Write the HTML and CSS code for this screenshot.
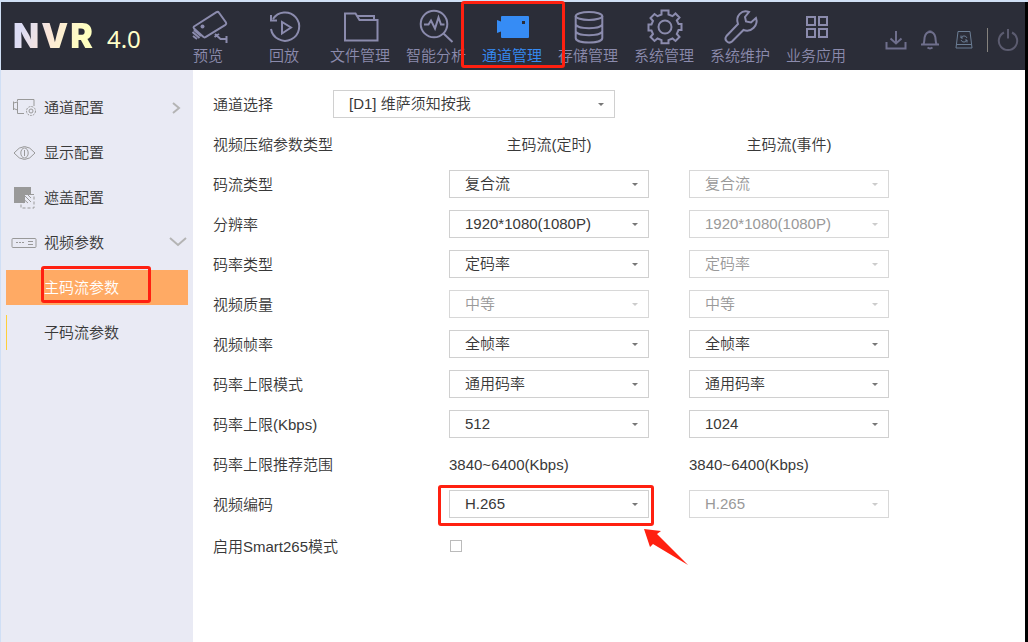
FILE: index.html
```html
<!DOCTYPE html>
<html lang="zh-CN">
<head>
    <meta charset="UTF-8">
    <meta name="viewport" content="width=device-width, initial-scale=1.0">
    <title>NVR 4.0</title>
    <link rel="stylesheet" href="styles.css">
</head>
<body>
    <div class="page">
        <header class="topbar">
            <div class="logo"><span class="logo-name">NVR</span><span class="logo-version">4.0</span></div>
            <nav class="main-nav">
                <a class="nav-item" href="#preview">
                    <svg class="nav-icon" viewBox="0 0 36 36"><path d="M4 18.500L26.500 4.200q1.500-.9 2.500.6L36 14.500q.8 1.400-.6 2.400L15.500 29.200q-1.300.7-2.300-.5L4 20.500q-.9-1.200 0-2zM24.500 29l4.500-3M25 26l5.500 5h6M36.500 28v7M2.500 24l7 6M3 28l4 3M4 22l7 6"/><circle class="fill" cx="12.500" cy="18.500" r="2"/></svg>
                    <span>预览</span>
                </a>
                <a class="nav-item" href="#playback">
                    <svg class="nav-icon" viewBox="0 0 36 36"><path d="M7 11a14.200 14.200 0 1 1-2 10M5 7v5.500h6M16 14v11.500l9-6z"/></svg>
                    <span>回放</span>
                </a>
                <a class="nav-item" href="#files">
                    <svg class="nav-icon" viewBox="0 0 36 36"><path d="M3 5.500h10.500l4 6.500H35.500v20.500H3zM15 8h17v4"/></svg>
                    <span>文件管理</span>
                </a>
                <a class="nav-item" href="#analysis">
                    <svg class="nav-icon" viewBox="0 0 36 36"><circle cx="16" cy="16" r="13.300"/><path d="M25.500 25.500l9 8.500M6 16.500h4.500l2.500-4 4 8 3.500-11 2.500 7h3.500"/></svg>
                    <span>智能分析</span>
                </a>
                <a class="nav-item active" href="#channel">
                    <svg class="nav-icon" viewBox="0 0 36 36"><path class="fill" fill-rule="evenodd" d="M3 12l4 1.500V9q0-1 1-1h26q1 0 1 1v20q0 1-1 1H8q-1 0-1-1v-5.500L3 25zM28 13v3h3v-3z"/></svg>
                    <span>通道管理</span>
                    <i class="mark mark-nav"></i>
                </a>
                <a class="nav-item" href="#storage">
                    <svg class="nav-icon" viewBox="0 0 36 36"><ellipse cx="19" cy="8" rx="13.300" ry="4"/><path d="M5.700 8v22c0 6 26.600 6 26.600 0V8M5.700 16c0 5.500 26.600 5.500 26.600 0M5.700 23c0 5.500 26.600 5.500 26.600 0"/></svg>
                    <span>存储管理</span>
                </a>
                <a class="nav-item" href="#system">
                    <svg class="nav-icon" viewBox="0 0 36 36"><path d="M15.500 2.500h7v4l4 1.700 3-2.700 4 4-2.700 3 1.700 3.500h3v6h-3L30.800 26l2.700 3-4 4-3-2.500-4 1.700v3h-7v-3l-4-1.700-3 2.500-4-4 2.500-3L5.500 22.500h-3v-6h3L7 13l-2.500-3 4-4 3 2.200 4-1.700z"/><circle cx="19" cy="19" r="6.500"/></svg>
                    <span>系统管理</span>
                </a>
                <a class="nav-item" href="#maintain">
                    <svg class="nav-icon" viewBox="0 0 36 36"><path d="M27 4c-7-3-14 4-11 12L4.500 28c-3 4 2 8.500 5.500 5.500L21.500 22c8 3 15-5 12.500-12l-5 4.500-5-1-1-4.500z"/></svg>
                    <span>系统维护</span>
                </a>
                <a class="nav-item" href="#apps">
                    <svg class="nav-icon" viewBox="0 0 36 36"><path d="M9 9h8v8H9zM21 9h8v8h-8zM9 21h8v8H9zM21 21h8v8h-8z"/></svg>
                    <span>业务应用</span>
                </a>
            </nav>
            <div class="tools">
                <button class="tool" type="button" aria-label="下载"><svg viewBox="0 0 22 22"><path d="M1.500 13v6.500h19V13M11 2v12M5.500 9.500L11 14.500l5.500-5"/></svg></button>
                <button class="tool" type="button" aria-label="报警"><svg viewBox="0 0 22 22"><path d="M2 15.500h18M4.500 15c1-2 .7-4 1.200-7C6.500 4.500 8.500 3 11 3s4.500 1.500 5.300 5c.5 3 .2 5 1.200 7M9.500 2.500h3M8.500 18.500q2.500 1.800 5 0"/></svg></button>
                <button class="tool tool-disk" type="button" aria-label="硬盘"><svg viewBox="0 0 22 22"><path d="M5 2.500h12L19 19H3zM3.500 15.500h15M8 9a3.200 3.200 0 0 1 6 0M14 11a3.200 3.200 0 0 1-6 0M8 6.500V9h2M14 13.500V11h-2"/></svg></button>
                <i class="divider"></i>
                <button class="tool tool-power" type="button" aria-label="电源"><svg viewBox="0 0 22 22"><path d="M7 3.500a9.200 9.200 0 1 0 8 0M11 0v9.500"/></svg></button>
            </div>
        </header>

        <div class="body">
            <aside class="sidebar">
                <a class="side-item" href="#channel-config">
                    <svg class="side-icon" viewBox="0 0 26 22"><path d="M5.500 4.500V2.500H22V9M5.500 5v11.500H12M1.500 4.500v8.500M1.500 6l4-1M1.500 11.500l4 1.500"/><circle cx="19" cy="14" r="4.500" stroke-dasharray="2 1"/><circle cx="19" cy="14" r="2"/></svg>
                    <span>通道配置</span>
                    <svg class="arrow" viewBox="0 0 16 12"><path d="M5 1l6 5-6 5"/></svg>
                </a>
                <a class="side-item" href="#display-config">
                    <svg class="side-icon" viewBox="0 0 26 22"><path d="M2 11q10.500-13 21 0-10.500 13-21 0z"/><ellipse cx="12.500" cy="11" rx="3.700" ry="5"/><path d="M12.500 8v6"/></svg>
                    <span>显示配置</span>
                </a>
                <a class="side-item" href="#mask-config">
                    <svg class="side-icon" viewBox="0 0 26 22"><path class="fill" d="M2 0h17v8h-6v8H2z"/><path d="M8 9l8 7M12 8l7 7M8 13l4 3M16 8l3 3"/><path stroke-dasharray="3 2" d="M19 7.500h3v13.500H9v-4"/></svg>
                    <span>遮盖配置</span>
                </a>
                <a class="side-item" href="#video-params">
                    <svg class="side-icon" viewBox="0 0 26 22"><rect x="0" y="6.500" width="24" height="9" rx="1"/><path d="M16 9.500h5M16 12.500h5M4 10.500h2M7 10.500h2M10 10.500h2"/></svg>
                    <span>视频参数</span>
                    <svg class="arrow arrow-down" viewBox="0 0 16 12"><path d="M0 1l8 7 8-7"/></svg>
                </a>
                <a class="side-item sub-item active" href="#main-stream"><span>主码流参数</span><i class="mark mark-side"></i></a>
                <a class="side-item sub-item" href="#sub-stream"><span>子码流参数</span></a>
            </aside>

            <form class="content">
                <div class="channel-row">
                    <label for="channel">通道选择</label>
                    <select id="channel"><option>[D1] 维萨须知按我</option></select>
                </div>
                <div class="params">
                    <span>视频压缩参数类型</span>
                    <span class="col-title">主码流(定时)</span>
                    <span class="col-title">主码流(事件)</span>

                    <label for="stream-type">码流类型</label>
                    <select id="stream-type"><option>复合流</option></select>
                    <select aria-label="码流类型 事件" disabled><option>复合流</option></select>

                    <label for="resolution">分辨率</label>
                    <select id="resolution"><option>1920*1080(1080P)</option></select>
                    <select aria-label="分辨率 事件" disabled><option>1920*1080(1080P)</option></select>

                    <label for="rate-type">码率类型</label>
                    <select id="rate-type"><option>定码率</option></select>
                    <select aria-label="码率类型 事件" disabled><option>定码率</option></select>

                    <label for="quality">视频质量</label>
                    <select id="quality" disabled><option>中等</option></select>
                    <select aria-label="视频质量 事件" disabled><option>中等</option></select>

                    <label for="fps">视频帧率</label>
                    <select id="fps"><option>全帧率</option></select>
                    <select aria-label="视频帧率 事件"><option>全帧率</option></select>

                    <label for="limit-mode">码率上限模式</label>
                    <select id="limit-mode"><option>通用码率</option></select>
                    <select aria-label="码率上限模式 事件"><option>通用码率</option></select>

                    <label for="limit">码率上限(Kbps)</label>
                    <select id="limit"><option>512</option></select>
                    <select aria-label="码率上限 事件"><option>1024</option></select>

                    <span>码率上限推荐范围</span>
                    <span>3840~6400(Kbps)</span>
                    <span>3840~6400(Kbps)</span>

                    <label for="codec">视频编码</label>
                    <div class="codec">
                        <select id="codec"><option>H.265</option></select>
                        <i class="mark mark-codec"></i>
                        <svg class="pointer" viewBox="0 0 46 38"><path d="M1 1l17 2-4 3 31 31-35-21-3 3z"/></svg>
                    </div>
                    <select aria-label="视频编码 事件" disabled><option>H.265</option></select>

                    <label for="smart265">启用Smart265模式</label>
                    <input id="smart265" type="checkbox">
                </div>
            </form>
        </div>
    </div>
</body>
</html>
```
FILE: styles.css
```css
* {
    box-sizing: border-box;
}
body {
    margin: 0;
    font-family: "Liberation Sans", "Noto Sans CJK SC", sans-serif;
    font-size: 15px;
    font-weight: 350;
    line-height: 20px;
    color: #383838;
    background: #fff;
}
a {
    color: inherit;
    text-decoration: none;
}
svg {
    display: block;
    fill: none;
    stroke: currentColor;
    overflow: visible;
}
.fill {
    fill: currentColor;
    stroke: none;
}
.page {
    display: flex;
    flex-direction: column;
    min-height: 100vh;
    border-top: 2px solid #d0dff5;
}

/* top bar */
.topbar {
    display: flex;
    height: 68px;
    background: #2b2d38;
    border-left: 1px solid #d0dff5;
    border-right: 3px solid #000;
}
.logo {
    display: flex;
    align-items: baseline;
    gap: 12px;
    width: 169px;
    padding: 10px 0 0 12px;
    line-height: 48px;
}
.logo-name {
    font-family: Inter, sans-serif;
    font-size: 34px;
    font-weight: 900;
    letter-spacing: 2px;
    color: transparent;
    background: linear-gradient(110deg, #dcdcf4 15%, #fbe6d8 45%, #ffffc0 80%);
    -webkit-background-clip: text;
    background-clip: text;
}
.logo-version {
    font-family: "Noto Sans", sans-serif;
    font-size: 24px;
    font-weight: 400;
    color: #ffffc8;
}
.main-nav {
    display: flex;
}
.nav-item {
    position: relative;
    display: flex;
    flex-direction: column;
    align-items: center;
    gap: 3px;
    width: 76px;
    padding-top: 6px;
    line-height: 18px;
    color: #8b8bad;
    white-space: nowrap;
}
.nav-item.active {
    color: #368cf5;
}
.nav-icon {
    width: 36px;
    height: 36px;
    stroke-width: 2;
}
.tools {
    display: flex;
    align-items: center;
    gap: 12px;
    margin-left: auto;
    padding: 8px 6px 0 0;
    color: #6f6f8c;
}
.tool {
    width: 22px;
    padding: 0;
    border: 0;
    background: none;
    color: inherit;
}
.tool svg {
    height: 22px;
    stroke-width: 2;
}
.tool-disk {
    color: #6b7d94;
}
.tool-disk svg {
    stroke-width: 1;
}
.tool-power {
    color: #5c5c70;
}
.divider {
    width: 1px;
    height: 24px;
    margin-right: -3px;
    background: #85827e;
}

/* side menu */
.body {
    display: flex;
    flex: 1;
    border-right: 3px solid #000;
}
.sidebar {
    display: flex;
    flex-direction: column;
    gap: 10px;
    flex: none;
    width: 193px;
    padding: 20px 5px;
    border-left: 1px solid #d0dff5;
    background: #e9eaf4;
}
.side-item {
    position: relative;
    display: flex;
    align-items: center;
    gap: 6px;
    height: 35px;
    padding: 0 1px 0 6px;
}
.side-icon {
    width: 26px;
    height: 22px;
    color: #999;
}
.arrow {
    width: 16px;
    height: 12px;
    margin-left: auto;
    margin-right: 3px;
    color: #b4b4b4;
    stroke-width: 2;
}
.arrow-down {
    margin-right: 1px;
}
.sub-item {
    padding-left: 37px;
    border-left: 1px solid #ffcf3a;
}
.sub-item.active {
    color: #fff;
    background: #ffaa64;
    border-left-color: #ffaa64;
}

/* form */
.content {
    flex: 1;
    padding: 14px 20px;
}
.content label,
.params > span {
    padding-top: 2px;
}
.channel-row {
    display: flex;
    align-items: center;
    height: 40px;
}
.channel-row label {
    width: 120px;
}
.channel-row select {
    width: 282px;
}
.params {
    display: grid;
    grid-template-columns: 196px 200px 200px;
    grid-template-rows: repeat(10, 40px) 44px;
    column-gap: 40px;
    align-items: center;
}
.col-title {
    text-align: center;
}
select {
    display: block;
    width: 100%;
    height: 28px;
    padding: 0 15px;
    border: 1px solid #d0d0d0;
    border-radius: 0;
    appearance: none;
    font: inherit;
    color: #383838;
    background: #fff url("data:image/svg+xml,%3Csvg xmlns='http://www.w3.org/2000/svg' width='6' height='3'%3E%3Cpath d='M0 0h6L3 3z' fill='%23777'/%3E%3C/svg%3E") no-repeat right 10px center;
}
select:disabled {
    color: #999;
    opacity: 1;
    border-color: #d8d8d8;
    background-image: url("data:image/svg+xml,%3Csvg xmlns='http://www.w3.org/2000/svg' width='6' height='3'%3E%3Cpath d='M0 0h6L3 3z' fill='%23ccc'/%3E%3C/svg%3E");
}
input[type="checkbox"] {
    width: 12px;
    height: 12px;
    margin: 0 1px;
    border: 1px solid #bbb;
    appearance: none;
    background: #fff;
}
.codec {
    position: relative;
}

/* red marks over the page */
.mark {
    position: absolute;
    z-index: 2;
    border: 3px solid #ff2010;
    border-radius: 3px;
    pointer-events: none;
}
.mark-nav {
    top: -1px;
    left: -13px;
    width: 104px;
    height: 67px;
}
.mark-side {
    top: -4px;
    left: 34px;
    width: 110px;
    height: 37px;
}
.mark-codec {
    top: -5px;
    left: -11px;
    width: 216px;
    height: 41px;
}
.pointer {
    position: absolute;
    top: 38px;
    left: 194px;
    width: 46px;
    height: 38px;
    fill: #ff2010;
    stroke: none;
}
```
